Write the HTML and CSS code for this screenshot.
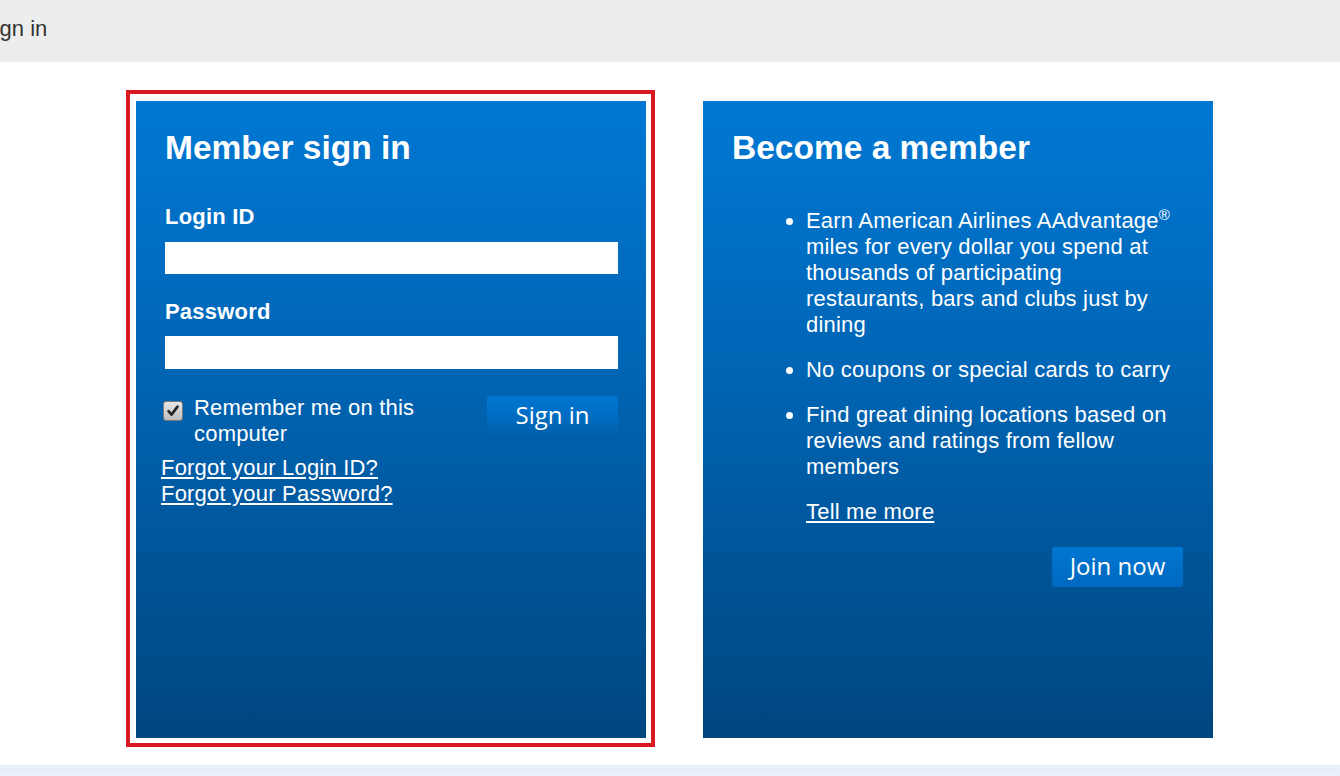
FILE: index.html
```html
<!DOCTYPE html>
<html lang="en">
<head>
<meta charset="utf-8">
<title>Sign in</title>
<link rel="stylesheet" href="styles.css">
</head>
<body>
<header class="topbar"><span class="topbar-title">Sign in</span></header>
<main class="main">
  <div class="signin-frame">
    <section class="panel">
      <h2 class="panel-title">Member sign in</h2>
      <label class="field-label" for="login">Login ID</label>
      <input class="field-input" id="login" type="text">
      <label class="field-label field-label--second" for="pwd">Password</label>
      <input class="field-input field-input--second" id="pwd" type="password">
      <div class="action-row">
        <label class="remember">
          <span class="cb"><svg viewBox="0 0 20 20" width="20" height="20"><path d="M5 10.2 L8.4 14 L15 5.2" fill="none" stroke="#262626" stroke-width="3" stroke-linecap="round" stroke-linejoin="round"/></svg></span>
          <span class="remember-text">Remember me on this computer</span>
        </label>
        <button class="btn btn-signin" type="button">Sign in</button>
      </div>
      <div class="links">
        <a href="#" class="link">Forgot your Login ID?</a>
        <a href="#" class="link">Forgot your Password?</a>
      </div>
    </section>
  </div>
  <section class="panel panel--join">
    <h2 class="panel-title">Become a member</h2>
    <ul class="benefits">
      <li>Earn American Airlines AAdvantage<sup class="reg">®</sup> miles for every dollar you spend at thousands of participating restaurants, bars and clubs just by dining</li>
      <li>No coupons or special cards to carry</li>
      <li>Find great dining locations based on reviews and ratings from fellow members</li>
    </ul>
    <p class="more"><a href="#" class="link">Tell me more</a></p>
    <div class="join-row"><button class="btn btn-join" type="button">Join now</button></div>
  </section>
</main>
<footer class="footband"></footer>
</body>
</html>
```
FILE: styles.css
```css
html, body {
  margin: 0;
  padding: 0;
  background: #ffffff;
  font-family: "Liberation Sans", Arial, sans-serif;
  overflow: hidden;
}

.topbar {
  height: 62px;
  box-sizing: border-box;
  background: #ededed;
  padding-top: 16px;
  font-size: 22px;
  line-height: 26px;
  color: #333333;
  white-space: nowrap;
  overflow: hidden;
}

.topbar-title {
  display: inline-block;
  margin-left: -20px;
}

.main {
  display: flex;
  align-items: flex-start;
  padding: 28px 0 18px 126px;
}

.signin-frame {
  border: 4px solid #d71a21;
  padding: 7px 5px 5px 6px;
  background: #ffffff;
}

.panel {
  width: 510px;
  height: 637px;
  box-sizing: border-box;
  padding: 28px 28px 0 29px;
  background: linear-gradient(to bottom, #0078d3 0%, #0066b6 40%, #00467f 100%);
  color: #ffffff;
  display: flex;
  flex-direction: column;
  letter-spacing: 0.2px;
}

.panel--join {
  margin-left: 48px;
  margin-top: 11px;
  padding-right: 30px;
}

.panel-title {
  margin: 0;
  font-size: 33.5px;
  line-height: 38px;
  font-weight: bold;
  letter-spacing: 0;
}

.field-label {
  display: block;
  margin-top: 37px;
  font-size: 22px;
  line-height: 26px;
  font-weight: bold;
}

.field-label--second {
  margin-top: 25px;
}

.field-input {
  display: block;
  margin: 12px 0 0 0;
  width: 453px;
  height: 32px;
  box-sizing: border-box;
  border: none;
  padding: 0 6px;
  background: #ffffff;
  font-size: 18px;
  font-family: inherit;
}

.field-input--second {
  margin-top: 11px;
  height: 33px;
}

.action-row {
  display: flex;
  justify-content: space-between;
  align-items: flex-start;
  margin-top: 26px;
}

.remember {
  display: flex;
  align-items: flex-start;
  font-size: 22px;
  line-height: 26px;
}

.cb {
  flex: none;
  width: 20px;
  height: 20px;
  box-sizing: border-box;
  margin: 6px 11px 0 -2px;
  border: 1px solid #7a7a7a;
  border-radius: 3px;
  background: linear-gradient(to bottom, #e6e6e6, #bdbdbd);
  display: flex;
}

.cb svg {
  width: 18px;
  height: 18px;
}

.remember-text {
  width: 250px;
}

.btn {
  width: 131px;
  height: 40px;
  border: none;
  border-radius: 3px;
  color: #ffffff;
  font-family: "Open Sans", "Noto Sans", sans-serif;
  font-size: 24px;
  line-height: 38px;
  letter-spacing: 0;
  padding: 0 0 2px 0;
  cursor: pointer;
}

.btn-signin {
  margin-top: 1px;
  background: linear-gradient(to bottom, #0075d0 0%, #006ec5 45%, rgba(0, 98, 175, 0) 100%);
}

.links {
  display: flex;
  flex-direction: column;
  align-items: flex-start;
  margin-top: 8px;
  margin-left: -4px;
  font-size: 22px;
  line-height: 26px;
}

.link {
  color: #ffffff;
  text-decoration: underline;
  text-underline-offset: 2px;
}

.benefits {
  margin: 41px 0 0 0;
  padding: 0 12px 0 74px;
  font-size: 22px;
  line-height: 26px;
}

.benefits li {
  margin-bottom: 19px;
}

.reg {
  font-size: 15px;
  line-height: 0;
  vertical-align: 8px;
  letter-spacing: 0;
}

.more {
  margin: 0 0 0 74px;
  font-size: 22px;
  line-height: 26px;
}

.join-row {
  display: flex;
  justify-content: flex-end;
  margin-top: 22px;
}

.btn-join {
  background: linear-gradient(to bottom, #0077d2, #0068bf);
}

.footband {
  height: 30px;
  background: linear-gradient(to bottom, #e4effa, #f4f8fd);
}
```
